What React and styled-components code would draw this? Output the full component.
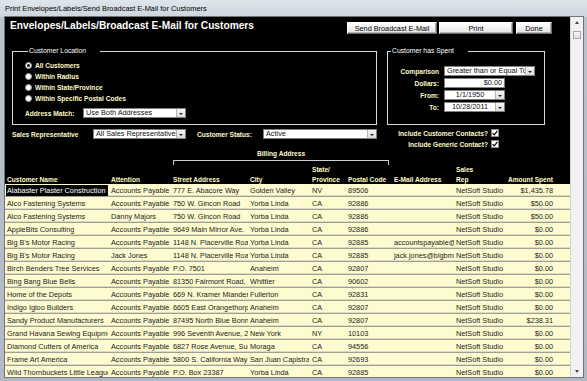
import React from 'react';
import styled, { createGlobalStyle } from 'styled-components';

const GlobalStyle = createGlobalStyle`
  html, body { margin: 0; padding: 0; background: #ffffff; }
  body { font-family: "Liberation Sans", Arial, sans-serif; }
`;

const PALE = '#fffbc6';

const Window = styled.div`
  width: 587px;
  height: 381px;
  box-sizing: border-box;
  display: flex;
  flex-direction: column;
  padding: 0 4px 4px 5px;
  overflow: hidden;
  background: linear-gradient(180deg, #dfe5ec 0, #cdd5de 17px, #bac3cc 17px, #b1bac4 100%);
`;

const TitleBar = styled.div`
  height: 17px;
  display: flex;
  align-items: center;
  font-size: 7.4px;
  color: #000;
  white-space: nowrap;
`;

const Client = styled.div`
  flex: 1;
  min-height: 0;
  display: flex;
  box-shadow: 0 0 0 1px #6c747e;
`;

const Main = styled.div`
  flex: 1;
  min-width: 0;
  display: flex;
  flex-direction: column;
  background: #000;
  overflow: hidden;
`;

const TopBar = styled.div`
  display: flex;
  align-items: flex-start;
  justify-content: space-between;
  padding: 5px 18px 0 5px;
`;

const Heading = styled.h1`
  margin: -2px 0 0;
  font-size: 10.2px;
  line-height: 12px;
  font-weight: bold;
  color: #fff;
  white-space: nowrap;
`;

const ButtonGroup = styled.div`
  display: flex;
  gap: 2px;
`;

const Button = styled.button`
  width: ${p => p.w}px;
  height: 12px;
  box-sizing: border-box;
  margin-left: ${p => p.ml || 0}px;
  padding: 0;
  font-family: inherit;
  font-size: 7.3px;
  color: #000;
  background: linear-gradient(#ffffff, #e4e4e4);
  border: 1px solid;
  border-color: #ffffff #6a6a6a #6a6a6a #ffffff;
  box-shadow: inset -1px -1px 0 #b0b0b0;
`;

const FrameRow = styled.div`
  display: flex;
  gap: 10px;
  margin-top: 13px;
  padding-left: 7px;
`;

const Frame = styled.fieldset`
  margin: 0;
  min-width: 0;
  width: ${p => p.w}px;
  height: 78px;
  box-sizing: border-box;
  padding: ${p => p.pad};
  border: 1px solid #d9d9d9;
`;

const Legend = styled.legend`
  margin-left: 3px;
  padding: 0 14px 0 1px;
  font-size: 6.8px;
  line-height: 8px;
  color: #fff;
`;

const Label = styled.span`
  font-size: 6.6px;
  font-weight: bold;
  color: ${PALE};
  white-space: nowrap;
  width: ${p => (p.w ? `${p.w}px` : 'auto')};
  margin-left: ${p => p.ml || 0}px;
  text-align: ${p => p.align || 'left'};
  flex-shrink: 0;
`;

const RadioRow = styled.div`
  display: flex;
  align-items: center;
  gap: 3px;
  height: 11px;
`;

const Radio = styled.span`
  width: 7px;
  height: 7px;
  box-sizing: border-box;
  border-radius: 50%;
  background: #fff;
  border: 1px solid #9a9a9a;
  display: flex;
  align-items: center;
  justify-content: center;
  &::after {
    content: '';
    width: 3px;
    height: 3px;
    border-radius: 50%;
    background: ${p => (p.checked ? '#111' : 'transparent')};
  }
`;

const FieldRow = styled.div`
  display: flex;
  align-items: center;
  height: ${p => p.h || 10}px;
  margin-top: ${p => p.mt || 0}px;
  gap: ${p => p.gap || 0}px;
`;

const SpentRows = styled.div`
  display: flex;
  flex-direction: column;
  gap: 2px;
`;

const Combo = styled.div`
  width: ${p => p.w}px;
  height: 10px;
  box-sizing: border-box;
  background: #fff;
  border: 1px solid #808080;
  display: flex;
  align-items: stretch;
  font-size: 7.3px;
  line-height: 8px;
  color: #111;
  overflow: hidden;
  flex-shrink: 0;
`;

const ComboText = styled.span`
  flex: 1;
  min-width: 0;
  padding: 0 2px;
  white-space: nowrap;
  overflow: hidden;
  text-align: ${p => p.align || 'left'};
`;

const ComboButton = styled.span`
  width: 8px;
  flex-shrink: 0;
  background: linear-gradient(#f4f4f4, #dcdcdc);
  border-left: 1px solid #b4b4b4;
  display: flex;
  align-items: flex-end;
  justify-content: center;
  &::after {
    content: '';
    margin-bottom: 2px;
    border-left: 2px solid transparent;
    border-right: 2px solid transparent;
    border-top: 2px solid #222;
  }
`;

const FilterRow = styled.div`
  display: flex;
  align-items: flex-start;
  margin-top: 3px;
  padding: 0 71px 0 7px;
`;

const Checks = styled.div`
  margin-left: auto;
  display: flex;
  flex-direction: column;
  gap: 1px;
`;

const CheckRow = styled.div`
  display: flex;
  align-items: center;
  justify-content: flex-end;
  gap: 3px;
  height: 10px;
`;

const CheckBox = styled.span`
  width: 8px;
  height: 8px;
  box-sizing: border-box;
  background: #fff;
  border: 1px solid #8a8a8a;
  display: flex;
  align-items: center;
  justify-content: center;
`;

const Bracket = styled.div`
  margin: 1px 0 0 168px;
  width: 216px;
`;

const BracketLabel = styled.div`
  height: 8px;
  line-height: 8px;
  font-size: 6.6px;
  font-weight: bold;
  color: ${PALE};
  text-align: center;
`;

const BracketLine = styled.div`
  margin-top: 2px;
  height: 5px;
  box-sizing: border-box;
  border: 1px solid #d0d0d0;
  border-bottom: none;
`;

const COLS = '103px 63px 77px 61px 36px 46px 63px 50px 51px 1fr';

const HeaderRow = styled.div`
  display: grid;
  grid-template-columns: ${COLS};
  align-items: end;
  height: 19px;
  box-sizing: border-box;
  padding-bottom: 2px;
`;

const HeaderCell = styled.div`
  font-size: 6.6px;
  line-height: 10px;
  font-weight: bold;
  color: ${PALE};
  white-space: nowrap;
  padding-left: ${p => p.pl || 0}px;
  padding-right: ${p => p.pr || 0}px;
  text-align: ${p => p.align || 'left'};
`;

const Rows = styled.div`
  display: flex;
  flex-direction: column;
`;

const DataRow = styled.div`
  display: grid;
  grid-template-columns: ${COLS};
  align-items: center;
  height: 13px;
  flex-shrink: 0;
  box-sizing: border-box;
  background: #fdfbcf;
  border-bottom: 1px solid #a09f97;
  box-shadow: inset 0 -1px 0 #dedcc0;
  font-size: 7.3px;
  color: #1c1c1c;
`;

const Cell = styled.div`
  white-space: nowrap;
  overflow: hidden;
  padding-left: ${p => p.pl || 0}px;
  padding-right: ${p => p.pr || 0}px;
  text-align: ${p => p.align || 'left'};
`;

const Selected = styled.span`
  display: block;
  margin-left: -1px;
  padding-left: 1px;
  line-height: 11px;
  background: #050505;
  color: #fff;
  overflow: hidden;
`;

const Scrollbar = styled.div`
  width: 12px;
  flex-shrink: 0;
  display: flex;
  flex-direction: column;
  align-items: center;
  background: #f1f1f1;
  border-left: 1px solid #d4d4d4;
`;

const ScrollArrow = styled.div`
  height: 11px;
  width: 100%;
  display: flex;
  align-items: center;
  justify-content: center;
  &::after {
    content: '';
    border-left: 2.5px solid transparent;
    border-right: 2.5px solid transparent;
    ${p => (p.down ? 'border-top: 3px solid #3a4a66;' : 'border-bottom: 3px solid #3a4a66;')}
  }
`;

const Thumb = styled.div`
  width: 8px;
  height: 8px;
  margin-top: 3px;
  box-sizing: border-box;
  border: 1px solid #a8a8a8;
  background: linear-gradient(#f6f6f6, #dedede);
`;

const Spacer = styled.div`
  flex: 1;
`;

const cols = [
  { key: 'name', title: 'Customer Name', pl: 2 },
  { key: 'attn', title: 'Attention', pl: 3 },
  { key: 'street', title: 'Street Address', pl: 2 },
  { key: 'city', title: 'City', pl: 2 },
  { key: 'state', title: ['State/', 'Province'], pl: 3 },
  { key: 'zip', title: 'Postal Code', pl: 3 },
  { key: 'email', title: 'E-Mail Address', pl: 3 },
  { key: 'rep', title: ['Sales', 'Rep'], pl: 2 },
  { key: 'amount', title: 'Amount Spent', pr: 2, align: 'right' },
];

const rows = [
  ['Alabaster Plaster Construction', 'Accounts Payable', '777 E. Abacore Way', 'Golden Valley', 'NV', '89506', '', '$1,435.78'],
  ['Alco Fastening Systems', 'Accounts Payable', '750 W. Gincon Road', 'Yorba Linda', 'CA', '92886', '', '$50.00'],
  ['Alco Fastening Systems', 'Danny Majors', '750 W. Gincon Road', 'Yorba Linda', 'CA', '92886', '', '$50.00'],
  ['AppleBits Consulting', 'Accounts Payable', '9649 Main Mirror Ave.', 'Yorba Linda', 'CA', '92886', '', '$0.00'],
  ["Big B's Motor Racing", 'Accounts Payable', '1148 N. Placerville Road', 'Yorba Linda', 'CA', '92885', 'accountspayable@bigbmotor.com', '$0.00'],
  ["Big B's Motor Racing", 'Jack Jones', '1148 N. Placerville Road', 'Yorba Linda', 'CA', '92885', 'jack.jones@bigbmotor.com', '$0.00'],
  ['Birch Benders Tree Services', 'Accounts Payable', 'P.O. 7501', 'Anaheim', 'CA', '92807', '', '$0.00'],
  ['Bing Bang Blue Bells', 'Accounts Payable', '81350 Fairmont Road, Suite 4', 'Whittier', 'CA', '90602', '', '$0.00'],
  ['Home of the Depots', 'Accounts Payable', '669 N. Kramer Miander Blvd.', 'Fullerton', 'CA', '92831', '', '$0.00'],
  ['Indigo Igloo Builders', 'Accounts Payable', '6605 East Orangethorpe Ave.', 'Anaheim', 'CA', '92807', '', '$0.00'],
  ['Sandy Product Manufacturers', 'Accounts Payable', '87495 North Blue Bonnet Way', 'Anaheim', 'CA', '92807', '', '$238.31'],
  ['Grand Havana Sewing Equipment', 'Accounts Payable', '996 Seventh Avenue, 2nd Floor', 'New York', 'NY', '10103', '', '$0.00'],
  ['Diamond Cutters of America', 'Accounts Payable', '6827 Rose Avenue, Suite 12', 'Moraga', 'CA', '94556', '', '$0.00'],
  ['Frame Art America', 'Accounts Payable', '5800 S. California Way', 'San Juan Capistrano', 'CA', '92693', '', '$0.00'],
  ['Wild Thornbuckets Little League', 'Accounts Payable', 'P.O. Box 23387', 'Yorba Linda', 'CA', '92885', '', '$0.00'],
];

function Dropdown({ w, value, align }) {
  return (
    <Combo w={w}>
      <ComboText align={align}>{value}</ComboText>
      <ComboButton />
    </Combo>
  );
}

function Check({ label }) {
  return (
    <CheckRow>
      <Label>{label}</Label>
      <CheckBox>
        <svg width="6" height="6" viewBox="0 0 6 6">
          <path d="M0.6 3.1 L2.3 4.8 L5.4 0.9" fill="none" stroke="#000" strokeWidth="1.2" />
        </svg>
      </CheckBox>
    </CheckRow>
  );
}

export default function App() {
  return (
    <>
      <GlobalStyle />
      <Window>
        <TitleBar>Print Envelopes/Labels/Send Broadcast E-Mail for Customers</TitleBar>
        <Client>
          <Main>
            <TopBar>
              <Heading>Envelopes/Labels/Broadcast E-Mail for Customers</Heading>
              <ButtonGroup>
                <Button w={90}>Send Broadcast E-Mail</Button>
                <Button w={74}>Print</Button>
                <Button w={36} ml={1}>Done</Button>
              </ButtonGroup>
            </TopBar>

            <FrameRow>
              <Frame w={365} pad="5px 0 0 12px">
                <Legend>Customer Location</Legend>
                <RadioRow><Radio checked /><Label>All Customers</Label></RadioRow>
                <RadioRow><Radio /><Label>Within Radius</Label></RadioRow>
                <RadioRow><Radio /><Label>Within State/Province</Label></RadioRow>
                <RadioRow><Radio /><Label>Within Specific Postal Codes</Label></RadioRow>
                <FieldRow h={12} mt={3}>
                  <Label w={58}>Address Match:</Label>
                  <Dropdown w={103} value="Use Both Addresses" />
                </FieldRow>
              </Frame>
              <Frame w={158} pad="11px 0 0 0">
                <Legend>Customer has Spent</Legend>
                <SpentRows>
                  <FieldRow gap={5}>
                    <Label w={51} align="right">Comparison</Label>
                    <Dropdown w={91} value="Greater than or Equal To" />
                  </FieldRow>
                  <FieldRow gap={5}>
                    <Label w={51} align="right">Dollars:</Label>
                    <Combo w={61}><ComboText align="right">$0.00</ComboText></Combo>
                  </FieldRow>
                  <FieldRow gap={5}>
                    <Label w={51} align="right">From:</Label>
                    <Dropdown w={61} value="1/1/1950" align="center" />
                  </FieldRow>
                  <FieldRow gap={5}>
                    <Label w={51} align="right">To:</Label>
                    <Dropdown w={61} value="10/28/2011" align="center" />
                  </FieldRow>
                </SpentRows>
              </Frame>
            </FrameRow>

            <FilterRow>
              <FieldRow mt={1}>
                <Label w={81}>Sales Representative</Label>
                <Dropdown w={93} value="All Sales Representatives" />
                <Label w={66} ml={11}>Customer Status:</Label>
                <Dropdown w={114} value="Active" />
              </FieldRow>
              <Checks>
                <Check label="Include Customer Contacts?" />
                <Check label="Include Generic Contact?" />
              </Checks>
            </FilterRow>

            <Bracket>
              <BracketLabel>Billing Address</BracketLabel>
              <BracketLine />
            </Bracket>

            <HeaderRow>
              {cols.map(c => (
                <HeaderCell key={c.key} pl={c.pl} pr={c.pr} align={c.align}>
                  {Array.isArray(c.title) ? c.title.map(t => <div key={t}>{t}</div>) : c.title}
                </HeaderCell>
              ))}
            </HeaderRow>

            <Rows>
              {rows.map((r, i) => (
                <DataRow key={i}>
                  <Cell pl={2}>{i === 0 ? <Selected>{r[0]}</Selected> : r[0]}</Cell>
                  <Cell pl={3}>{r[1]}</Cell>
                  <Cell pl={2}>{r[2]}</Cell>
                  <Cell pl={2}>{r[3]}</Cell>
                  <Cell pl={3}>{r[4]}</Cell>
                  <Cell pl={3}>{r[5]}</Cell>
                  <Cell pl={3}>{r[6]}</Cell>
                  <Cell pl={2}>NetSoft Studio</Cell>
                  <Cell pr={2} align="right">{r[7]}</Cell>
                  <Cell />
                </DataRow>
              ))}
            </Rows>
          </Main>
          <Scrollbar>
            <ScrollArrow />
            <Thumb />
            <Spacer />
            <ScrollArrow down />
          </Scrollbar>
        </Client>
      </Window>
    </>
  );
}
